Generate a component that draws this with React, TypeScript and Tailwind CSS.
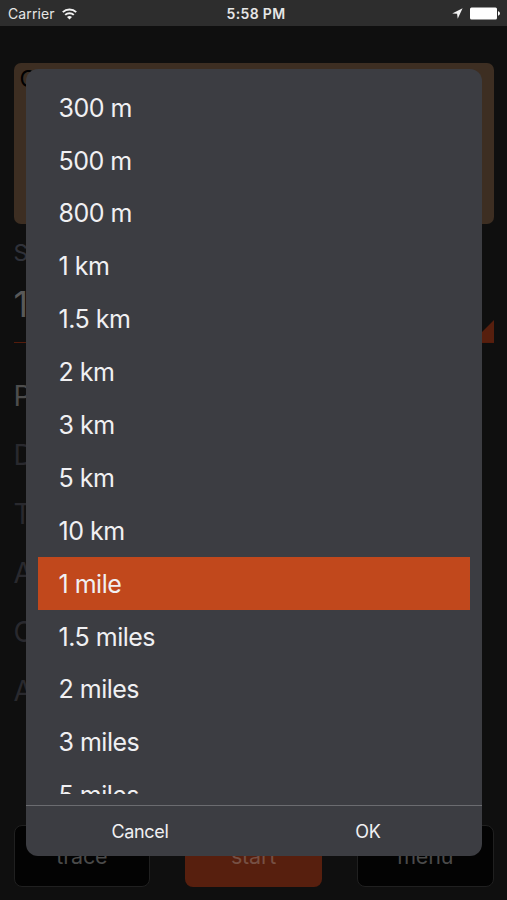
import { useState } from 'react'

const distances = [
  '300 m',
  '500 m',
  '800 m',
  '1 km',
  '1.5 km',
  '2 km',
  '3 km',
  '5 km',
  '10 km',
  '1 mile',
  '1.5 miles',
  '2 miles',
  '3 miles',
  '5 miles',
]

function StatusBar() {
  return (
    <header className="grid h-[26px] shrink-0 grid-cols-3 items-center bg-[#2d2d2d] pt-px pr-[7px] pl-2 text-[#e6e6e6]">
      <div className="flex items-center gap-[7px]">
        <span className="text-[14px] leading-none tracking-[0.1px]">Carrier</span>
        <svg width="15" height="12" viewBox="0 0 15 12" fill="none" stroke="#f2f2f2" strokeWidth="2">
          <path d="M0.8 4.1a9.6 9.6 0 0 1 13.4 0" />
          <path d="M3.2 6.9a6.2 6.2 0 0 1 8.6 0" />
          <path d="M7.5 11.6 5 9.1a3.6 3.6 0 0 1 5 0z" fill="#f2f2f2" stroke="none" />
        </svg>
      </div>
      <span className="pl-[4px] text-center text-[14px] leading-none font-semibold tracking-[0.35px] whitespace-nowrap">5:58 PM</span>
      <div className="flex items-center justify-end gap-[7px]">
        <svg width="11" height="11" viewBox="0 0 11 11" fill="#f2f2f2">
          <path d="M10.6 0.3 0.2 5.5l4.9 0.3 0.6 5z" />
        </svg>
        <svg width="30" height="13" viewBox="0 0 30 13" fill="#ffffff">
          <rect x="0" y="0.5" width="27" height="12" rx="1.5" />
          <path d="M28 4.3c2.6 0.6 2.6 3.8 0 4.4z" />
        </svg>
      </div>
    </header>
  )
}

function Workout() {
  return (
    <main className="flex flex-1 flex-col px-[13.5px] pt-[37px] pb-[13px]">
      <div className="h-[161px] rounded-[7px] bg-[#3d2e22] px-[6px] pt-1 text-[23px] leading-6 text-black">
        Choose
      </div>
      <div className="mt-[14px] text-[23px] leading-[30px] text-[#30323a]">Split distance</div>
      <div className="flex h-[75px] items-end justify-between border-b border-[#551c0c]">
        <span className="pb-[14px] text-[36px] leading-[48px] text-[#595959]">1 mile</span>
        <svg width="22" height="22" viewBox="0 0 22 22" fill="#571f0e">
          <path d="M22 0v22H0z" />
        </svg>
      </div>
      <div className="mt-[24px] text-[28px] leading-[59px] text-[#29292e]">
        <div className="text-[#4d4d4d]">Pace</div>
        <div>Distance</div>
        <div>Time</div>
        <div>Average</div>
        <div>Current</div>
        <div>Ascent</div>
      </div>
      <div className="mt-auto grid h-[62px] grid-cols-3 gap-[35px] text-[21.5px] tracking-[-0.2px] text-[#4a4a4a]">
        <button className="rounded-[8px] border border-[#202020] bg-[#030303]">trace</button>
        <button className="rounded-[8px] bg-[#571f0e] text-[#765044]">start</button>
        <button className="rounded-[8px] border border-[#202020] bg-[#030303]">menu</button>
      </div>
    </main>
  )
}

export default function App() {
  const [selected, setSelected] = useState('1 mile')

  return (
    <div className="relative flex h-[900px] w-[507px] flex-col overflow-hidden bg-[#0f0f0f] font-['Inter','Liberation_Sans',sans-serif]">
      <StatusBar />
      <Workout />

      <div
        role="dialog"
        className="absolute top-[69px] left-[26px] flex h-[787px] w-[456px] flex-col rounded-[12px] bg-[#3c3d42] pt-3 text-[#f0f0f2]"
      >
        <ul className="mx-3 h-[713px] overflow-hidden">
          {distances.map((distance) => (
            <li
              key={distance}
              onClick={() => setSelected(distance)}
              className={`flex h-[52.9px] items-center pt-[2px] pl-[20.5px] text-[25px] tracking-[-0.5px] ${distance === selected ? 'bg-[#c1481c]' : ''}`}
            >
              {distance}
            </li>
          ))}
        </ul>
        <div className="mt-[11px] grid flex-1 grid-cols-2 border-t border-[#6b6c70] text-[18px] tracking-[-0.3px]">
          <button>Cancel</button>
          <button>OK</button>
        </div>
      </div>
    </div>
  )
}
